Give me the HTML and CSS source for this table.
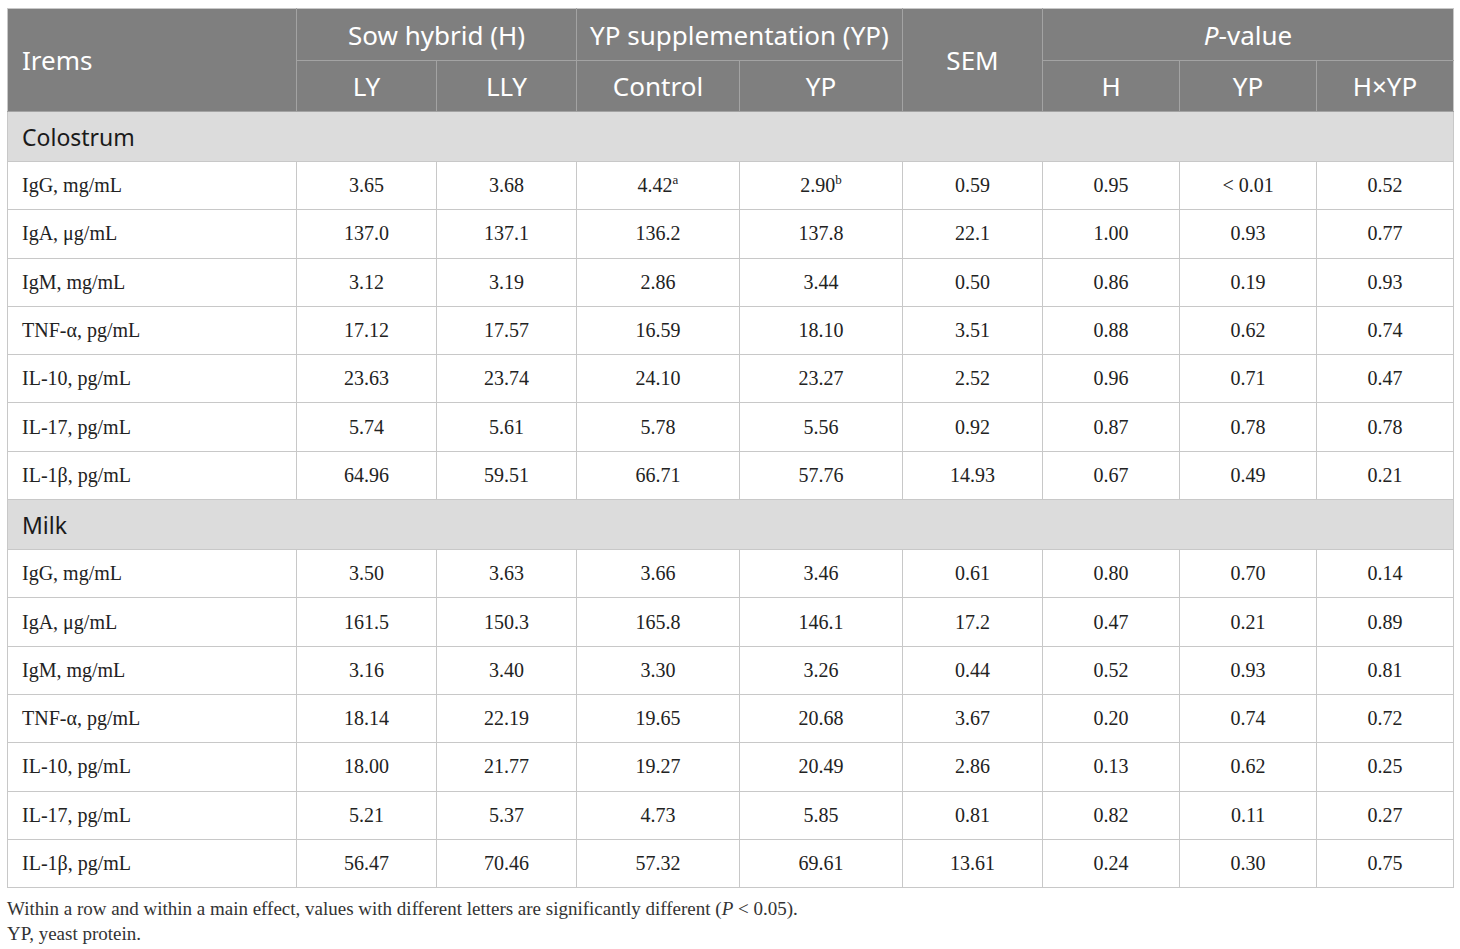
FILE: index.html
```html
<!DOCTYPE html>
<html>
<head>
    <meta charset="UTF-8">
    <title>Table</title>
    <link rel="stylesheet" href="styles.css">
</head>
<body>
<div class="wrap">
    <table class="data">
        <colgroup>
            <col class="c-name">
            <col class="c-mid"><col class="c-mid">
            <col class="c-wide"><col class="c-wide">
            <col class="c-mid">
            <col class="c-p"><col class="c-p"><col class="c-p">
        </colgroup>
        <thead>
        <tr class="h1">
            <th rowspan="2" class="left">Irems</th>
            <th colspan="2">Sow hybrid (H)</th>
            <th colspan="2">YP supplementation (YP)</th>
            <th rowspan="2">SEM</th>
            <th colspan="3"><i>P</i>-value</th>
        </tr>
        <tr class="h2">
            <th>LY</th>
            <th>LLY</th>
            <th>Control</th>
            <th>YP</th>
            <th>H</th>
            <th>YP</th>
            <th>H×YP</th>
        </tr>
        </thead>
        <tbody>
        <tr class="sec"><td colspan="9">Colostrum</td></tr>
        <tr><td>IgG, mg/mL</td><td>3.65</td><td>3.68</td><td>4.42<sup>a</sup></td><td>2.90<sup>b</sup></td><td>0.59</td><td>0.95</td><td>&lt; 0.01</td><td>0.52</td></tr>
        <tr><td>IgA, μg/mL</td><td>137.0</td><td>137.1</td><td>136.2</td><td>137.8</td><td>22.1</td><td>1.00</td><td>0.93</td><td>0.77</td></tr>
        <tr><td>IgM, mg/mL</td><td>3.12</td><td>3.19</td><td>2.86</td><td>3.44</td><td>0.50</td><td>0.86</td><td>0.19</td><td>0.93</td></tr>
        <tr><td>TNF-α, pg/mL</td><td>17.12</td><td>17.57</td><td>16.59</td><td>18.10</td><td>3.51</td><td>0.88</td><td>0.62</td><td>0.74</td></tr>
        <tr><td>IL-10, pg/mL</td><td>23.63</td><td>23.74</td><td>24.10</td><td>23.27</td><td>2.52</td><td>0.96</td><td>0.71</td><td>0.47</td></tr>
        <tr><td>IL-17, pg/mL</td><td>5.74</td><td>5.61</td><td>5.78</td><td>5.56</td><td>0.92</td><td>0.87</td><td>0.78</td><td>0.78</td></tr>
        <tr><td>IL-1β, pg/mL</td><td>64.96</td><td>59.51</td><td>66.71</td><td>57.76</td><td>14.93</td><td>0.67</td><td>0.49</td><td>0.21</td></tr>
        <tr class="sec"><td colspan="9">Milk</td></tr>
        <tr><td>IgG, mg/mL</td><td>3.50</td><td>3.63</td><td>3.66</td><td>3.46</td><td>0.61</td><td>0.80</td><td>0.70</td><td>0.14</td></tr>
        <tr><td>IgA, μg/mL</td><td>161.5</td><td>150.3</td><td>165.8</td><td>146.1</td><td>17.2</td><td>0.47</td><td>0.21</td><td>0.89</td></tr>
        <tr><td>IgM, mg/mL</td><td>3.16</td><td>3.40</td><td>3.30</td><td>3.26</td><td>0.44</td><td>0.52</td><td>0.93</td><td>0.81</td></tr>
        <tr><td>TNF-α, pg/mL</td><td>18.14</td><td>22.19</td><td>19.65</td><td>20.68</td><td>3.67</td><td>0.20</td><td>0.74</td><td>0.72</td></tr>
        <tr><td>IL-10, pg/mL</td><td>18.00</td><td>21.77</td><td>19.27</td><td>20.49</td><td>2.86</td><td>0.13</td><td>0.62</td><td>0.25</td></tr>
        <tr><td>IL-17, pg/mL</td><td>5.21</td><td>5.37</td><td>4.73</td><td>5.85</td><td>0.81</td><td>0.82</td><td>0.11</td><td>0.27</td></tr>
        <tr><td>IL-1β, pg/mL</td><td>56.47</td><td>70.46</td><td>57.32</td><td>69.61</td><td>13.61</td><td>0.24</td><td>0.30</td><td>0.75</td></tr>
        </tbody>
    </table>
    <div class="notes">
        <p>Within a row and within a main effect, values with different letters are significantly different (<i>P</i> &lt; 0.05).</p>
        <p>YP, yeast protein.</p>
    </div>
</div>
</body>
</html>
```

FILE: styles.css
```css
* {
    margin: 0;
    padding: 0;
    box-sizing: border-box;
}

body {
    background: #fff;
    color: #222;
    font-family: "Liberation Serif", "Times New Roman", serif;
}

.wrap {
    padding: 8px 7px 0 7px;
}

.data {
    width: 1446px;
    border-collapse: collapse;
    table-layout: fixed;
}

.c-name { width: 289px; }
.c-mid { width: 140px; }
.c-wide { width: 163px; }
.c-p { width: 137px; }

.data th {
    background: #7f7f7f;
    color: #fff;
    font-family: "Noto Sans", "Open Sans", sans-serif;
    font-weight: normal;
    font-size: 26px;
    text-align: center;
    border: 1px solid #a3a3a3;
}

.data th.left {
    text-align: left;
    padding-left: 14px;
}

.data thead tr:first-child th {
    border-top-color: #c8c8c8;
}

.data th:first-child {
    border-left-color: #c8c8c8;
}

.data th:last-child {
    border-right-color: #c8c8c8;
}

.h1 { height: 52px; }
.h2 { height: 51px; }

.data td {
    border: 1px solid #c8c8c8;
    font-size: 20px;
    text-align: center;
    height: 48.3px;
    color: #222;
}

.data td:first-child {
    text-align: left;
    padding-left: 14px;
}

.data tr.sec td {
    background: #dcdcdc;
    font-family: "Noto Sans", "Open Sans", sans-serif;
    font-size: 23px;
    color: #1a1a1a;
    height: 50px;
}

.data sup {
    font-size: 13px;
    vertical-align: 8px;
    line-height: 0;
}

.notes {
    padding-top: 8px;
    font-size: 19px;
    color: #333;
}

.notes p {
    line-height: 25px;
}
```
